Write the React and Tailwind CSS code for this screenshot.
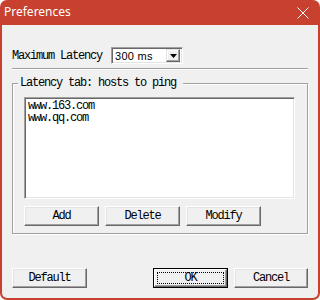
import React from "react";

const mono = { fontFamily: '"Liberation Mono", "DejaVu Sans Mono", monospace' };

function Btn({ children, w = "w-[75px]", def = false }) {
  if (def) {
    return (
      <div className={`${w} h-[20px] border border-black bg-[#f0f0f0] flex`}>
        <div className="flex-1 border border-t-white border-l-white border-r-[#696969] border-b-[#696969] shadow-[inset_-1px_-1px_0_#a0a0a0] flex p-[2px]">
          <div className="flex-1 border border-dotted border-black flex items-center justify-center text-[12px] leading-[12px] tracking-[-1.2px] text-black" style={mono}>
            {children}
          </div>
        </div>
      </div>
    );
  }
  return (
    <div className={`${w} h-[20px] border border-t-white border-l-white border-r-[#696969] border-b-[#696969] shadow-[inset_-1px_-1px_0_#a0a0a0,inset_1px_1px_0_#e3e3e3] bg-[#f0f0f0] flex items-center justify-center text-[12px] leading-[12px] tracking-[-1.2px] text-black`} style={mono}>
      {children}
    </div>
  );
}

export default function App() {
  return (
    <div className="w-[320px] h-[300px] bg-[#c8412e] rounded-[7px] px-[2px] pb-[2px] flex flex-col">
      <div className="h-[25px] flex items-center justify-between pl-[2px] pr-[9px] shrink-0">
        <span className="text-white text-[12px] leading-[14px] mt-[-2px]" style={{ fontFamily: '"Noto Sans", "Open Sans", sans-serif' }}>
          Preferences
        </span>
        <svg width="12" height="12" viewBox="0 0 12 12" className="mt-[1px]">
          <path d="M0.5 0.5 L11.5 11.5 M11.5 0.5 L0.5 11.5" stroke="white" strokeWidth="1" fill="none" />
        </svg>
      </div>
      <div className="flex-1 bg-[#f0f0f0] rounded-b-[5px] pt-[22px] px-[10px] flex flex-col">
        <div className="h-[17px] flex items-center">
          <span className="w-[99px] text-[12px] leading-[12px] tracking-[-1.2px] text-black whitespace-nowrap" style={mono}>
            Maximum Latency
          </span>
          <div className="w-[72px] h-[17px] bg-white border border-t-[#a0a0a0] border-l-[#a0a0a0] border-r-white border-b-white shadow-[inset_1px_1px_0_#696969,inset_-1px_-1px_0_#e3e3e3] flex items-center pl-[3px] pr-[2px] py-[1px]">
            <span className="flex-1 text-[11px] leading-[12px] tracking-[0.3px] text-black" style={{ fontFamily: '"Liberation Sans", Arial, sans-serif' }}>
              300 ms
            </span>
            <div className="w-[14px] h-[13px] bg-[#f0f0f0] border border-t-[#e3e3e3] border-l-[#e3e3e3] border-r-[#696969] border-b-[#696969] shadow-[inset_-1px_-1px_0_#a0a0a0,inset_1px_1px_0_white] flex items-center justify-center">
              <svg width="7" height="4" viewBox="0 0 7 4">
                <path d="M0 0 H7 L3.5 4 Z" fill="black" />
              </svg>
            </div>
          </div>
        </div>
        <div className="mt-[4px] h-px bg-[#a0a0a0]" />
        <div className="h-px bg-white" />
        <div className="relative mt-[13px] h-[151px] border border-[#a0a0a0] shadow-[inset_1px_1px_0_white,1px_1px_0_white] pt-[13px] pl-[11px] pr-[12px] flex flex-col">
          <span className="absolute left-[5px] top-[-7px] bg-[#f0f0f0] pl-[2px] pr-[7px] text-[12px] leading-[12px] tracking-[-1.2px] text-black whitespace-nowrap" style={mono}>
            Latency tab: hosts to ping
          </span>
          <div className="h-[102px] bg-white border border-t-[#a0a0a0] border-l-[#a0a0a0] border-r-white border-b-white shadow-[inset_1px_1px_0_#696969,inset_-1px_-1px_0_#e3e3e3] pt-[2px] pl-[3px] text-[12px] leading-[12px] tracking-[-1.2px] text-black" style={mono}>
            <div>www.163.com</div>
            <div>www.qq.com</div>
          </div>
          <div className="mt-[7px] flex gap-[6px]">
            <Btn>Add</Btn>
            <Btn>Delete</Btn>
            <Btn>Modify</Btn>
          </div>
        </div>
        <div className="mt-[34px] flex">
          <Btn>Default</Btn>
          <div className="ml-auto flex gap-[6px]">
            <Btn def>OK</Btn>
            <Btn w="w-[74px]">Cancel</Btn>
          </div>
        </div>
      </div>
    </div>
  );
}
